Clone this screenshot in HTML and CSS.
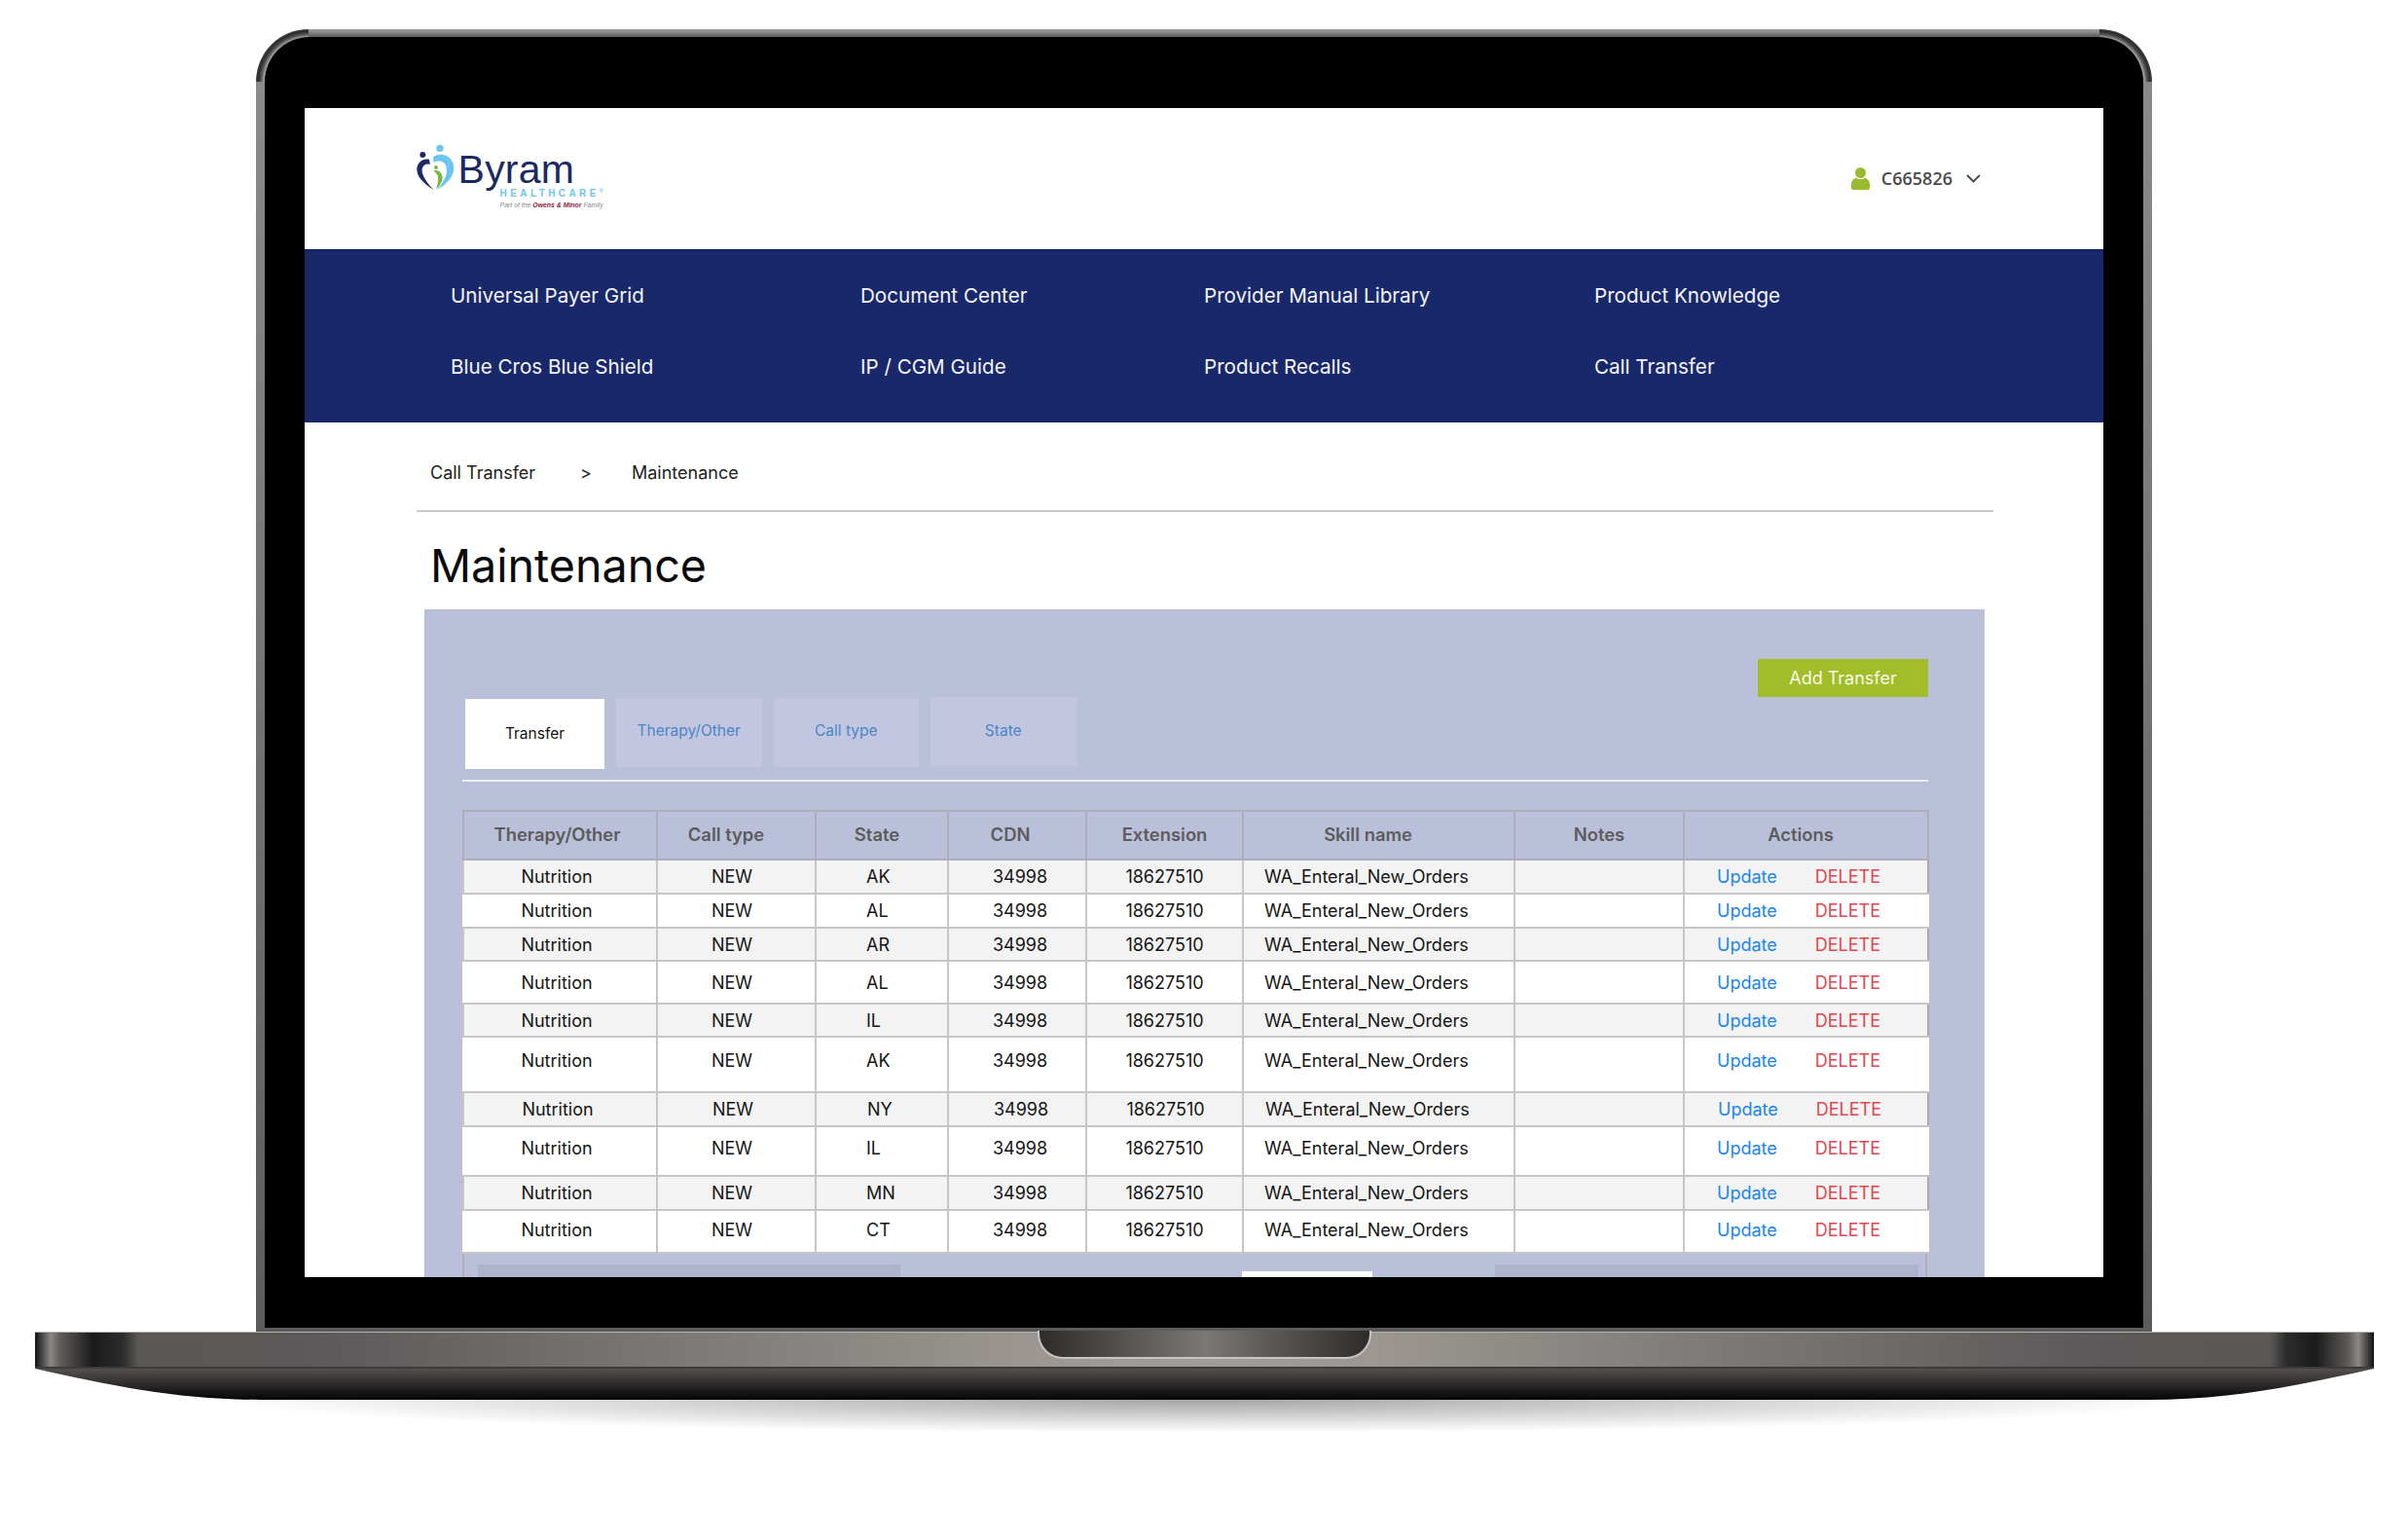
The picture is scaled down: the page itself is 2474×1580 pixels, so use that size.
FILE: index.html
```html
<!DOCTYPE html>
<html lang="en">
<head>
<meta charset="utf-8">
<title>Maintenance</title>
<link rel="stylesheet" href="styles.css">
</head>
<body>
<div class="device">
  <div class="lid">
    <div class="bezel">
      <div class="screen">
        <header class="top">
          <div class="logo">
            <svg class="logo-mark" viewBox="50 50 125 150" aria-hidden="true">
              <circle cx="72" cy="86" r="9" fill="#1b2a66"/>
              <path fill="#1b2a66" d="M92 100C70 95 52 112 54 135C56 160 85 180 105 195C85 170 68 150 70 130C72 118 82 112 95 115Z"/>
              <circle cx="125" cy="66" r="11" fill="#6cc5ee"/>
              <path fill="#6cc5ee" d="M105 92C125 78 165 85 168 125C170 155 140 180 118 193C135 170 150 150 145 125C142 108 125 100 105 110Z"/>
              <circle cx="113" cy="125" r="6" fill="#7ab63a"/>
              <path fill="#7ab63a" d="M105 135C118 130 132 140 133 155C133 170 122 185 114 193C118 175 122 160 118 150C115 143 110 140 105 135Z"/>
            </svg>
            <div class="logo-words">
              <div class="logo-name">Byram</div>
              <div class="logo-sub">HEALTHCARE<sup>®</sup></div>
              <div class="logo-tag">Part of the <b>Owens &amp; Minor</b> Family</div>
            </div>
          </div>
          <div class="user">
            <svg class="user-icon" viewBox="0 0 19 23" aria-hidden="true">
              <circle cx="9.5" cy="5.5" r="5.5" fill="#9bbb2e"/>
              <path fill="#9bbb2e" d="M0 18C0 13 3 11.5 5 10.5C7 12.5 12 12.5 14 10.5C16 11.5 19 13 19 18V21Q19 23 16 23H3Q0 23 0 21Z"/>
            </svg>
            <span class="user-id">C665826</span>
            <svg class="chev" viewBox="0 0 15 9" aria-hidden="true"><path d="M1 1L7.5 7.5L14 1" fill="none" stroke="#444" stroke-width="1.8"/></svg>
          </div>
        </header>
        <nav class="nav">
          <a>Universal Payer Grid</a><a>Document Center</a><a>Provider Manual Library</a><a>Product Knowledge</a>
          <a>Blue Cros Blue Shield</a><a>IP / CGM Guide</a><a>Product Recalls</a><a>Call Transfer</a>
        </nav>
        <div class="crumbs">
          <span class="crumb-a">Call Transfer</span><span class="crumb-sep">&gt;</span><span>Maintenance</span>
        </div>
        <h1 class="title">Maintenance</h1>
        <section class="panel">
          <div class="actions-bar"><button class="add">Add Transfer</button></div>
          <div class="tabs">
            <div class="tab tab-on">Transfer</div>
            <div class="tab tab-2">Therapy/Other</div>
            <div class="tab tab-2">Call type</div>
            <div class="tab tab-3">State</div>
          </div>
          <table class="grid">
            <colgroup><col class="w1"><col class="w2"><col class="w3"><col class="w4"><col class="w5"><col class="w6"><col class="w7"><col class="w8"></colgroup>
            <thead>
              <tr><th class="h1c">Therapy/Other</th><th class="h2c">Call type</th><th class="h3c">State</th><th class="h4c">CDN</th><th>Extension</th><th class="h6c">Skill name</th><th>Notes</th><th class="h8c">Actions</th></tr>
            </thead>
            <tbody>
              <tr class="alt r35"><td class="c1">Nutrition</td><td class="c2">NEW</td><td class="c3">AK</td><td class="c4">34998</td><td>18627510</td><td class="c6">WA_Enteral_New_Orders</td><td></td><td class="c8"><a class="up">Update</a><a class="del">DELETE</a></td></tr>
              <tr class="r35"><td class="c1">Nutrition</td><td class="c2">NEW</td><td class="c3">AL</td><td class="c4">34998</td><td>18627510</td><td class="c6">WA_Enteral_New_Orders</td><td></td><td class="c8"><a class="up">Update</a><a class="del">DELETE</a></td></tr>
              <tr class="alt r34"><td class="c1">Nutrition</td><td class="c2">NEW</td><td class="c3">AR</td><td class="c4">34998</td><td>18627510</td><td class="c6">WA_Enteral_New_Orders</td><td></td><td class="c8"><a class="up">Update</a><a class="del">DELETE</a></td></tr>
              <tr class="r44"><td class="c1">Nutrition</td><td class="c2">NEW</td><td class="c3">AL</td><td class="c4">34998</td><td>18627510</td><td class="c6">WA_Enteral_New_Orders</td><td></td><td class="c8"><a class="up">Update</a><a class="del">DELETE</a></td></tr>
              <tr class="alt r34"><td class="c1">Nutrition</td><td class="c2">NEW</td><td class="c3">IL</td><td class="c4">34998</td><td>18627510</td><td class="c6">WA_Enteral_New_Orders</td><td></td><td class="c8"><a class="up">Update</a><a class="del">DELETE</a></td></tr>
              <tr class="r57"><td class="c1">Nutrition</td><td class="c2">NEW</td><td class="c3">AK</td><td class="c4">34998</td><td>18627510</td><td class="c6">WA_Enteral_New_Orders</td><td></td><td class="c8"><a class="up">Update</a><a class="del">DELETE</a></td></tr>
              <tr class="alt r35 nudge"><td class="c1">Nutrition</td><td class="c2">NEW</td><td class="c3">NY</td><td class="c4">34998</td><td>18627510</td><td class="c6">WA_Enteral_New_Orders</td><td></td><td class="c8"><a class="up">Update</a><a class="del">DELETE</a></td></tr>
              <tr class="r51"><td class="c1">Nutrition</td><td class="c2">NEW</td><td class="c3">IL</td><td class="c4">34998</td><td>18627510</td><td class="c6">WA_Enteral_New_Orders</td><td></td><td class="c8"><a class="up">Update</a><a class="del">DELETE</a></td></tr>
              <tr class="alt r35"><td class="c1">Nutrition</td><td class="c2">NEW</td><td class="c3">MN</td><td class="c4">34998</td><td>18627510</td><td class="c6">WA_Enteral_New_Orders</td><td></td><td class="c8"><a class="up">Update</a><a class="del">DELETE</a></td></tr>
              <tr class="r44 last"><td class="c1">Nutrition</td><td class="c2">NEW</td><td class="c3">CT</td><td class="c4">34998</td><td>18627510</td><td class="c6">WA_Enteral_New_Orders</td><td></td><td class="c8"><a class="up">Update</a><a class="del">DELETE</a></td></tr>
            </tbody>
          </table>
          <div class="pager">
            <div class="pager-bar pager-left"></div>
            <div class="pager-page"></div>
            <div class="pager-bar pager-right"></div>
          </div>
        </section>
      </div>
    </div>
  </div>
  <div class="base">
    <div class="notch"></div>
    <div class="band"></div>
    <svg class="under" viewBox="0 0 2403 32" preserveAspectRatio="none" aria-hidden="true">
      <defs><linearGradient id="underFill" x1="0" y1="0" x2="0" y2="1"><stop offset="0" stop-color="#55504f"/><stop offset="1" stop-color="#050505"/></linearGradient></defs>
      <path fill="url(#underFill)" d="M0 0H2403C2323 18 2253 32 2171 32H232C150 32 80 18 0 0Z"/>
    </svg>
    <div class="shadow"></div>
  </div>
</div>
</body>
</html>
```

FILE: styles.css
```css
* { box-sizing: border-box; }
html, body { margin: 0; background: #fff; }
body { font-family: Inter, "Liberation Sans", sans-serif; color: #111; height: 1580px; overflow: hidden; }

.device { padding-top: 30px; }

/* lid */
.lid {
  margin-left: 263px;
  width: 1948px;
  height: 1338px;
  padding: 8px 9px 4px;
  border-radius: 54px 54px 0 0;
  background:
    radial-gradient(circle at 100% 100%, #9a9a9a 46px, #505050 49px, #2a2a2a 52px, #444 54px) 0 0 / 54px 54px no-repeat,
    radial-gradient(circle at 0 100%, #9a9a9a 46px, #505050 49px, #2a2a2a 52px, #444 54px) 100% 0 / 54px 54px no-repeat,
    linear-gradient(#a5a5a5, #5a5a5a) 54px 0 / calc(100% - 108px) 8px no-repeat,
    linear-gradient(#8c8c8c, #5c5c5c);
}
.bezel {
  height: 100%;
  padding: 73px 41px 52px;
  background: #000;
  border-radius: 46px 46px 0 0;
}
.screen { height: 1201px; background: #fff; overflow: hidden; }

/* header */
.top {
  height: 145px;
  display: flex;
  justify-content: space-between;
  align-items: flex-start;
  padding: 36px 126px 0 114px;
}
.logo { display: flex; align-items: flex-start; }
.logo-mark { width: 41.6px; height: 50px; flex: none; }
.logo-words { margin: 11px 0 0 2px; }
.logo-name { font: 500 41px/32px "Liberation Sans", sans-serif; color: #1b2a66; letter-spacing: .2px; }
.logo-sub { margin: 4px 0 0 43px; font: 700 10px/10px "Liberation Sans", sans-serif; letter-spacing: 3.4px; color: #6cc5ee; white-space: nowrap; }
.logo-sub sup { font-size: 5px; line-height: 0; letter-spacing: 0; }
.logo-tag { margin: 3px 0 0 43px; font: italic 6.9px/8px "Liberation Sans", sans-serif; color: #8a8a8a; white-space: nowrap; }
.logo-tag b { color: #8d1c3f; }

.user { display: flex; align-items: center; margin-top: 24px; height: 24px; }
.user-icon { width: 19px; height: 23px; }
.user-id { margin-left: 12px; font: 600 18px/24px "Open Sans", sans-serif; color: #4a4a4a; }
.chev { width: 15px; height: 9px; margin-left: 14px; }

/* nav */
.nav {
  height: 178px;
  background: #19286a;
  border-top: 1px solid #0d1a5a;
  padding: 27px 0 0 150px;
  display: grid;
  grid-template-columns: 421px 353px 401px 1fr;
  grid-auto-rows: 73px;
  font-size: 20.6px;
  line-height: 40px;
  color: #f2f4fa;
}

/* breadcrumb */
.crumbs {
  margin: 0 113px 0 115px;
  height: 92px;
  padding: 32px 0 0 14px;
  border-bottom: 2px solid #c9c9c9;
  font-size: 18px;
  line-height: 40px;
  display: flex;
  color: #222;
}
.crumb-a { width: 154px; }
.crumb-sep { width: 53px; }

.title { margin: 26px 0 0 129px; font-size: 46.6px; font-weight: 400; line-height: 58px; color: #0a0a0a; }

/* panel */
.panel {
  margin: 16px 122px 0 123px;
  height: 700px;
  background: #bac0da;
  padding: 51px 58px 0 39px;
}
.actions-bar { display: flex; justify-content: flex-end; }
.add {
  width: 175px;
  height: 39px;
  border: 0;
  padding: 0;
  background: #a2bd28;
  color: #f6f8ea;
  font: 400 18px Inter, sans-serif;
}
.tabs {
  display: flex;
  align-items: flex-start;
  gap: 12px;
  height: 87px;
  padding-left: 3px;
  border-bottom: 2px solid #edf0f7;
}
.tab {
  width: 149.5px;
  height: 71px;
  background: #c2c6e0;
  color: #4a86c5;
  font-size: 15.5px;
  line-height: 68px;
  text-align: center;
}
.tab-on {
  width: 143px;
  height: 72px;
  margin-top: 2px;
  background: #fff;
  color: #111;
  line-height: 72px;
}
.tab-2 { margin-top: 1px; }
.tab-3 { margin-top: 0; line-height: 70px; }

/* table */
.grid {
  margin-top: 29px;
  width: 1505px;
  table-layout: fixed;
  border-collapse: collapse;
  font-size: 18px;
}
.w1 { width: 199px; } .w2 { width: 163px; } .w3 { width: 136px; } .w4 { width: 142px; }
.w5 { width: 161px; } .w6 { width: 279px; } .w7 { width: 174px; } .w8 { width: 251px; }
.grid th, .grid td { border: 2px solid #b9b9b9; padding: 0; text-align: center; white-space: nowrap; }
.grid td { border-color: #c6c6c6; color: #151515; }
.grid th { height: 50px; padding-bottom: 2px; font-size: 18.4px; font-weight: 600; color: #5c5c5c; border-color: #adadbb; }
.grid tbody tr { background: #fff; }
.grid tbody tr.alt { background: #f3f3f3; }
.grid tbody tr td:first-child { border-left-color: #fff; }
.grid tbody tr td:last-child { border-right-color: #fff; }
.grid tbody tr.alt td:first-child { border-left-color: #c6c6c6; }
.grid tbody tr.alt td:last-child { border-right-color: #a8a8a8; }
.r35 td { height: 35px; }
.r34 td { height: 34px; }
.r44 td { height: 44px; }
.r57 td { height: 57px; padding-bottom: 8px; }
.r51 td { height: 51px; padding-bottom: 6px; }
.grid .last td { padding-bottom: 3px; }
.grid .h1c { padding-right: 6px; }
.grid .h2c { padding-right: 21px; }
.grid .h3c { padding-right: 10px; }
.grid .h4c { padding-right: 14px; }
.grid .h6c { padding-right: 22px; }
.grid .h8c { padding-right: 11px; }
.grid .c1 { padding-right: 7px; }
.grid .c2 { padding-right: 9px; }
.grid .c3 { text-align: left; padding-left: 51px; }
.grid .c4 { padding-left: 6px; }
.grid .c6 { text-align: left; padding-left: 21px; }
.grid .c8 { text-align: left; padding-left: 33px; }
.up { color: #1a86f0; margin-right: 39px; }
.del { color: #e0474f; }
.grid .nudge td { transform: translateX(1px); }
.grid .nudge td:first-child { border-left-color: #a8a8a8; }
.grid .nudge td:last-child { border-right-color: #f3f3f3; }

/* pager */
.pager {
  height: 40px;
  width: 1505px;
  display: flex;
  align-items: flex-start;
  padding: 11px 0 0 14px;
  border: solid #b0b0b0;
  border-width: 0 2px;
}
.pager > div { flex: none; }
.pager-bar { height: 40px; background: #aeb2cc; }
.pager-left { width: 434px; }
.pager-right { width: 435px; margin-left: 126px; }
.pager-page { width: 134px; height: 40px; margin: 7px 0 0 351px; background: #fff; }

/* base */
.base { position: relative; margin-left: 36px; width: 2403px; }
.band {
  height: 38px;
  border-top: 1px solid #b5b2ae;
  border-bottom: 2px solid #3e3c3a;
  background: linear-gradient(90deg, #111 0, #8a8886 16px, #5e5c5a 26px, #1a1a1a 60px, #2c2c2c 90px, #5a5855 106px, #5c5a5a 300px, #9c9792 1030px, #a19c97 1201px, #9c9792 1373px, #5c5a5a 2103px, #5a5855 2297px, #2c2c2c 2313px, #1a1a1a 2343px, #5e5c5a 2377px, #8a8886 2387px, #111 2403px);
}
.under { display: block; width: 2403px; height: 32px; }
.shadow {
  margin: 0 186px;
  height: 34px;
  background: radial-gradient(50% 100% at 50% 0, #a5a5a5 0, #fff 100%);
}
.notch {
  position: absolute;
  left: 1030px;
  top: -1px;
  width: 343px;
  height: 29px;
  border-radius: 0 0 26px 26px;
  border: solid #c8c5c0;
  border-width: 0 2px 2px;
  background: linear-gradient(90deg, #2e2c2b, #7a7875 50%, #2e2c2b);
}
```
